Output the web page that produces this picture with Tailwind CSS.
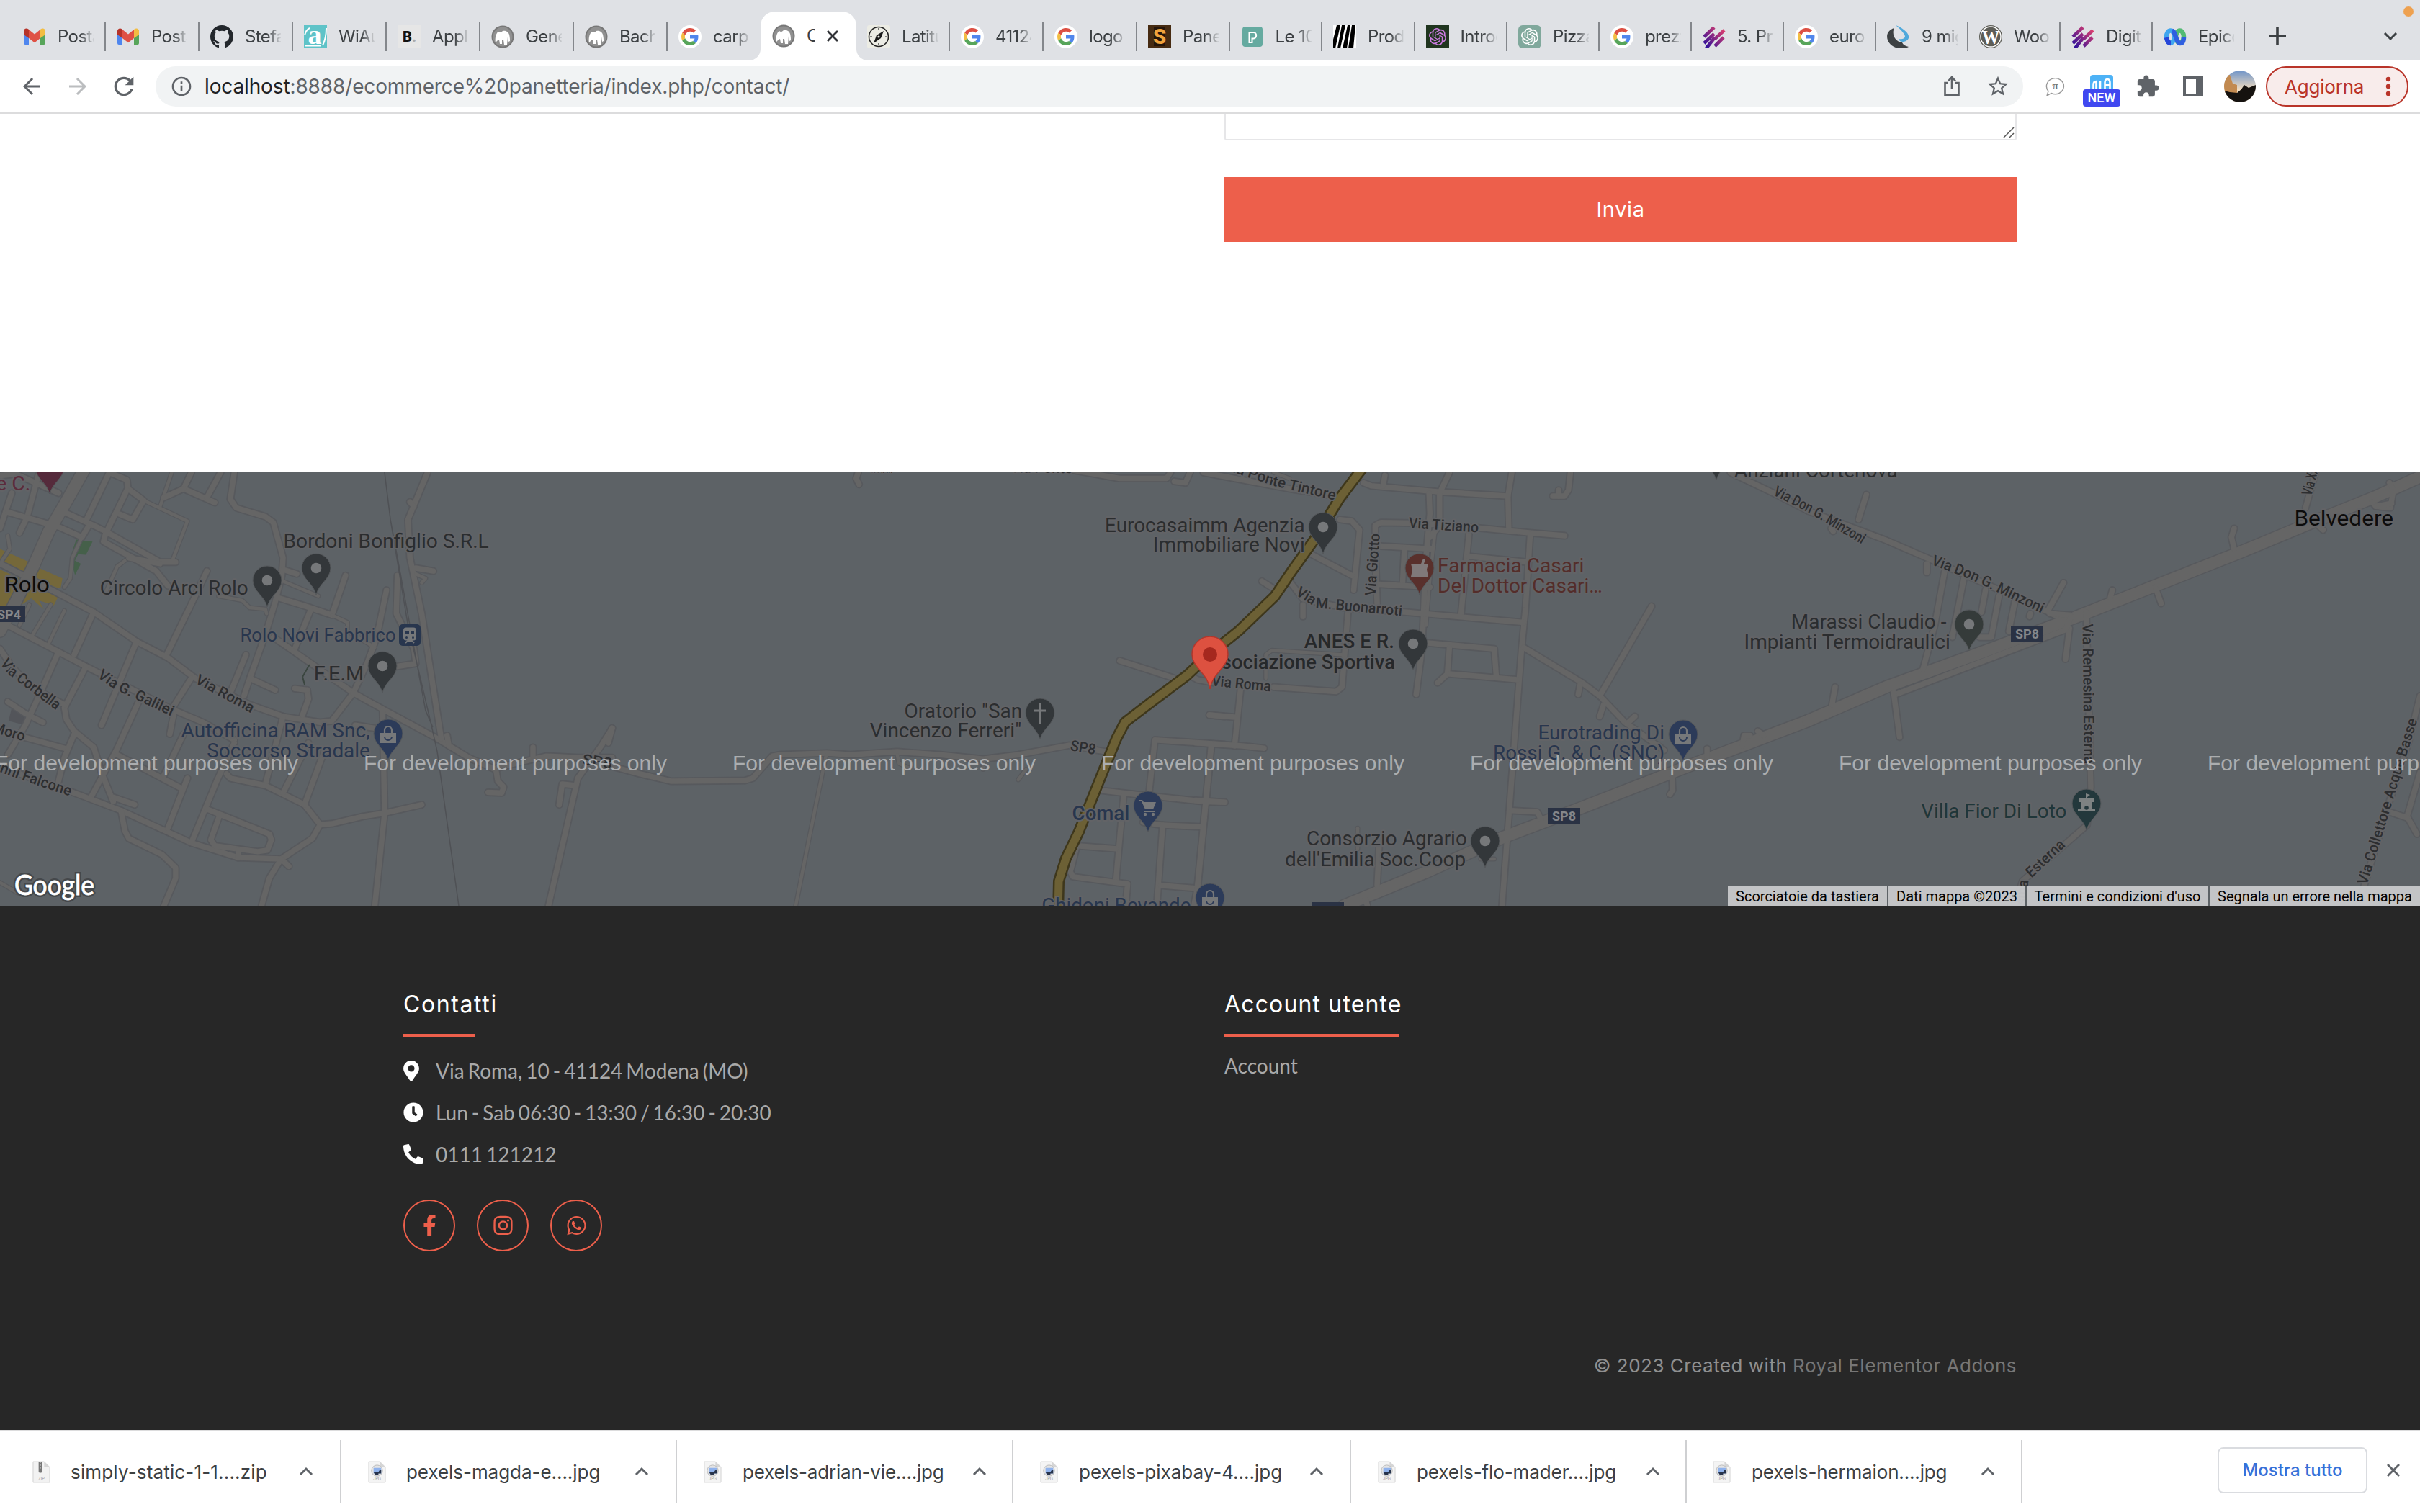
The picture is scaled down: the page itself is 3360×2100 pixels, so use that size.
<!DOCTYPE html>
<html lang="it">
<head>
<meta charset="utf-8">
<title>Contatti</title>
<script src="https://cdn.jsdelivr.net/npm/@tailwindcss/browser@4"></script>
</head>
<body class="w-[3360px] h-[2100px] overflow-hidden bg-white flex flex-col font-['Inter',sans-serif]">

<svg width="0" height="0" class="absolute">
  <defs>
    <symbol id="gmail" viewBox="0 0 32 32"><path d="M1 27V7l7 5v15H3a2 2 0 0 1-2-2z" fill="#4f86ee"/><path d="M31 27V7l-7 5v15h5a2 2 0 0 0 2-2z" fill="#57a55a"/><path d="M1 13V8C1 4.500 5 3.500 7.500 5.500L8 6v12z" fill="#b63329"/><path d="M8 6l8 6.500L24 6v12l-8 6.200L8 18z" fill="#df5145"/><path d="M31 13V8c0-3.500-4-4.500-6.500-2.500L24 6v12z" fill="#f3bd42"/></symbol>
    <symbol id="github" viewBox="0 0 16 16"><path fill="#23272c" d="M8 0C3.58 0 0 3.58 0 8c0 3.540 2.290 6.530 5.470 7.590.4.070.550-.170.550-.380 0-.190-.010-.820-.010-1.490-2.010.370-2.530-.490-2.690-.940-.090-.230-.480-.940-.820-1.130-.280-.150-.680-.520-.010-.530.630-.010 1.080.580 1.230.820.720 1.210 1.870.870 2.330.660.070-.520.280-.870.510-1.070-1.780-.2-3.640-.890-3.640-3.950 0-.870.310-1.590.820-2.150-.080-.2-.360-1.020.080-2.120 0 0 .670-.210 2.200.820.640-.180 1.320-.270 2-.270.680 0 1.360.090 2 .270 1.530-1.040 2.200-.820 2.200-.820.440 1.100.160 1.920.080 2.120.510.560.820 1.270.820 2.150 0 3.070-1.870 3.750-3.650 3.950.290.250.540.730.540 1.480 0 1.070-.010 1.930-.010 2.200 0 .210.150.460.550.380A8.013 8.013 0 0016 8c0-4.420-3.580-8-8-8z"/></symbol>
    <symbol id="teal-a" viewBox="0 0 32 32"><rect width="32" height="32" fill="#5fc3c8"/><path d="M1 14Q3 6 8 4M31 4q0 14-5 24M1 28.500h22" stroke="#fff" stroke-width="2" fill="none"/><text x="15" y="26" text-anchor="middle" font-family="Liberation Serif" font-weight="700" font-size="38" fill="#fff">a</text></symbol>
    <symbol id="b-dot" viewBox="0 0 32 32"><rect width="32" height="32" fill="#e6e6e6"/><text x="7" y="23" font-family="Roboto" font-weight="900" font-size="20" fill="#111">B<tspan fill="#aaa">.</tspan></text></symbol>
    <symbol id="mamp" viewBox="0 0 32 32"><circle cx="16" cy="16" r="15.500" fill="#777"/><circle cx="16" cy="16" r="13.500" fill="#909090"/><path d="M6 24c-1-4 0-13 4-15 2 2 4 1 6-1 5-1 8 2 9 5 1 4 1 7 1 9l-2 1-1-7-1 11h-4l-1-7h-2v6h-3l-1-6-2 1z" fill="#fff"/></symbol>
    <symbol id="google" viewBox="-8 -8 64 64"><circle cx="24" cy="24" r="32" fill="#fff"/><path fill="#dc5044" d="M24 9.500c3.540 0 6.710 1.220 9.210 3.600l6.850-6.850C35.900 2.380 30.470 0 24 0 14.620 0 6.510 5.380 2.560 13.220l7.980 6.190C12.430 13.720 17.740 9.500 24 9.500z"/><path fill="#5086ec" d="M46.980 24.550c0-1.570-.150-3.090-.380-4.550H24v9.020h12.940c-.580 2.960-2.260 5.480-4.780 7.180l7.730 6c4.510-4.180 7.090-10.360 7.090-17.650z"/><path fill="#f3be42" d="M10.530 28.590c-.480-1.450-.760-2.990-.760-4.590s.270-3.140.760-4.590l-7.980-6.190C.920 16.460 0 20.120 0 24c0 3.880.920 7.540 2.560 10.780l7.970-6.190z"/><path fill="#57a55a" d="M24 48c6.480 0 11.930-2.130 15.890-5.810l-7.730-6c-2.150 1.450-4.920 2.300-8.160 2.300-6.260 0-11.570-4.220-13.470-9.910l-7.980 6.190C6.510 42.620 14.620 48 24 48z"/></symbol>
    <symbol id="compass" viewBox="0 0 32 32"><rect width="32" height="32" rx="3" fill="#ecece4"/><circle cx="16" cy="16" r="13.500" fill="none" stroke="#222" stroke-width="1.600"/><path d="M16 4v3M16 25v3M4 16h3M25 16h3" stroke="#222" stroke-width="1.200"/><path d="M23 8l-4 10-10 7 4-11z" fill="#1a1a1a"/><circle cx="16" cy="16" r="1.600" fill="#ecece4"/></symbol>
    <symbol id="s-gold" viewBox="0 0 32 32"><rect width="32" height="32" fill="#462b12"/><rect x="8" y="3" width="16" height="26" fill="#24150a"/><text x="16" y="26" text-anchor="middle" font-family="Roboto" font-weight="900" font-size="29" fill="#f0a33c">S</text></symbol>
    <symbol id="p-teal" viewBox="0 0 32 32"><rect x="2" y="2" width="28" height="28" rx="4" fill="#65aaa0"/><path d="M11.500 24V10h6a4.300 4.300 0 0 1 0 8.500h-2V24z" fill="none" stroke="#fff" stroke-width="2"/></symbol>
    <symbol id="stripes" viewBox="0 0 32 32"><rect width="32" height="32" fill="#fff"/><path d="M0 32V20L5 0h5L3 32zM6 32L12 0h5L10 32zM13 32L20 0h4l-5 32zM21 32l5-32h5l-3 32z" fill="#000"/></symbol>
    <symbol id="knot" viewBox="0 0 24 24"><path fill="currentColor" d="M22.282 9.821a5.985 5.985 0 0 0-.516-4.911 6.046 6.046 0 0 0-6.510-2.900A6.065 6.065 0 0 0 4.981 4.182a5.985 5.985 0 0 0-3.998 2.900 6.046 6.046 0 0 0 .743 7.097 5.980 5.980 0 0 0 .511 4.911 6.051 6.051 0 0 0 6.515 2.900A5.985 5.985 0 0 0 13.260 24a6.056 6.056 0 0 0 5.772-4.206 5.989 5.989 0 0 0 3.998-2.900 6.056 6.056 0 0 0-.748-7.073zm-9.022 12.608a4.476 4.476 0 0 1-2.876-1.041l.142-.080 4.778-2.758a.795.795 0 0 0 .393-.681v-6.737l2.020 1.169a.071.071 0 0 1 .038.052v5.583a4.504 4.504 0 0 1-4.495 4.493zm-9.661-4.125a4.471 4.471 0 0 1-.535-3.014l.142.085 4.783 2.758a.771.771 0 0 0 .781 0l5.843-3.369v2.332a.080.080 0 0 1-.033.062L9.740 19.950a4.499 4.499 0 0 1-6.141-1.646zM2.341 7.896a4.485 4.485 0 0 1 2.366-1.973V11.600a.766.766 0 0 0 .388.677l5.814 3.354-2.020 1.169a.076.076 0 0 1-.071 0l-4.830-2.787A4.504 4.504 0 0 1 2.341 7.872zm16.596 3.856L13.104 8.364 15.119 7.200a.076.076 0 0 1 .071 0l4.830 2.791a4.494 4.494 0 0 1-.677 8.104v-5.677a.790.790 0 0 0-.406-.666zm2.011-3.023l-.142-.085-4.774-2.782a.776.776 0 0 0-.785 0L9.409 9.230V6.897a.066.066 0 0 1 .028-.062l4.830-2.787a4.499 4.499 0 0 1 6.681 4.661zM8.307 12.863l-2.020-1.164a.080.080 0 0 1-.038-.057V6.074a4.499 4.499 0 0 1 7.376-3.454l-.142.081L8.704 5.459a.795.795 0 0 0-.393.681zm1.097-2.365l2.602-1.500 2.607 1.500v2.999l-2.597 1.500-2.607-1.500z"/></symbol>
    <symbol id="knot-dark" viewBox="0 0 32 32"><rect width="32" height="32" fill="#20351f"/><use href="#knot" x="4" y="4" width="24" height="24" color="#cc7be0"/></symbol>
    <symbol id="knot-green" viewBox="0 0 32 32"><rect width="32" height="32" rx="6" fill="#80a89c"/><use href="#knot" x="4" y="4" width="24" height="24" color="#fff"/></symbol>
    <linearGradient id="pl" gradientUnits="userSpaceOnUse" x1="3" y1="30" x2="28" y2="4"><stop offset="0" stop-color="#2a0f9c"/><stop offset="1" stop-color="#e0406e"/></linearGradient>
    <symbol id="slashes" viewBox="0 0 32 32"><g stroke="url(#pl)" stroke-width="4.600" fill="none"><path d="M2 16L16 3M2 25L16 12M17 19L30 7M5 32L17 17M17 29L29 17"/></g></symbol>
    <symbol id="swirl" viewBox="0 0 32 32"><path d="M10 4C-4 8-3 25 12 31c6 2 13 2 18-1-5-1-8-3-9-6-10-1-15-12-11-20z" fill="#3d4143"/><path d="M12 0c8 3 17 9 18 15 1 4-2 7-7 8-4 0-6-1-7-4 4 1 9 0 9-4C23 10 18 5 12 0z" fill="#4fa9dc"/></symbol>
    <symbol id="wp" viewBox="0 0 32 32"><circle cx="16" cy="16" r="16" fill="#5d5d57"/><circle cx="16" cy="16" r="14" fill="none" stroke="#fff" stroke-width="1.400"/><text x="16" y="25.500" text-anchor="middle" textLength="25" lengthAdjust="spacingAndGlyphs" font-family="Liberation Serif" font-weight="700" font-size="28" fill="#fff">W</text></symbol>
    <symbol id="webex" viewBox="0 0 32 32"><g fill="none" stroke-width="6.500"><ellipse cx="22.500" cy="16" rx="5.500" ry="8.500" stroke="#54bb74"/><ellipse cx="9.500" cy="16" rx="5.500" ry="8.500" stroke="#3fa6ef"/><path d="M12 8c5 1 5 17 11 17 4 0 5-5 5-9" stroke="#2f5fe0"/><path d="M4 17c1 5 3 8 6 8" stroke="#2746d8"/></g></symbol>
    <symbol id="chev-up" viewBox="0 0 20 20"><path d="M2 14l8-8 8 8" fill="none" stroke="#5f6368" stroke-width="3"/></symbol>
    <symbol id="zip" viewBox="0 0 26 32"><path d="M1 1h16l8 8v22H1z" fill="#f2f2f2" stroke="#cfcfcf"/><path d="M17 1v8h8z" fill="#d5d5d5"/><rect x="9" y="1" width="5" height="16" rx="1.500" fill="#777"/><path d="M11.500 1v12" stroke="#ddd" stroke-dasharray="2 2"/><text x="13" y="28" text-anchor="middle" font-size="6" fill="#999">ZIP</text></symbol>
    <symbol id="jpg" viewBox="0 0 26 32"><path d="M1 1h16l8 8v22H1z" fill="#f4f4f4" stroke="#d2d2d2"/><path d="M17 1v8h8z" fill="#d5d5d5"/><circle cx="13" cy="14" r="8" fill="#e4e4e4" stroke="#b8b8b8"/><rect x="8" y="10" width="11" height="8" fill="#8fb2ec"/><path d="M8 16h7l2-3h2v5h-4v2h-5z" fill="#28344c"/><text x="13" y="28" text-anchor="middle" font-size="6" fill="#999">JPG</text></symbol>
  </defs>
</svg>

<!-- Tab strip -->
<header class="relative h-[84px] shrink-0 bg-[#dfe1e5] flex pl-[17px] text-[24px] text-[#3c4043]">
  <div id="tabs" class="flex h-full"></div>
  <div class="flex items-center pt-4 w-[260px] pl-8">
    <svg width="26" height="26" viewBox="0 0 26 26"><path d="M13 1v24M1 13h24" stroke="#3c4043" stroke-width="3.600"/></svg>
    <svg width="20" height="20" viewBox="0 0 20 20" class="ml-[134px]"><path d="M2 6l8 8 8-8" fill="none" stroke="#3c4043" stroke-width="3"/></svg>
  </div>
  <span class="absolute left-[3337px] top-[9px] size-3.5 rounded-full bg-[#eea150]"></span>
</header>

<!-- Toolbar -->
<div class="h-[74px] shrink-0 border-b-2 border-[#dcdcdd] flex items-center pl-[26px] text-[#5f6368]">
  <svg width="36" height="36" viewBox="0 0 24 24" fill="currentColor"><path d="M20 11H7.830l5.590-5.590L12 4l-8 8 8 8 1.410-1.410L7.830 13H20v-2z"/></svg>
  <svg width="36" height="36" viewBox="0 0 24 24" fill="#bbbdbf" class="ml-7"><path d="M12 4l-1.410 1.410L16.170 11H4v2h12.170l-5.580 5.590L12 20l8-8z"/></svg>
  <svg width="40" height="40" viewBox="0 0 24 24" fill="currentColor" class="ml-[26px]"><path d="M17.650 6.350C16.200 4.900 14.210 4 12 4c-4.420 0-7.990 3.580-7.990 8s3.570 8 7.990 8c3.730 0 6.840-2.550 7.730-6h-2.080c-.820 2.330-3.040 4-5.650 4-3.310 0-6-2.690-6-6s2.690-6 6-6c1.660 0 3.140.690 4.220 1.780L13 11h7V4l-2.350 2.350z"/></svg>
  <div class="ml-6 w-[2593px] h-14 rounded-full bg-[#f1f3f4] flex items-center pl-5">
    <svg width="32" height="32" viewBox="0 0 24 24" fill="currentColor"><path d="M11 7h2v2h-2zm0 4h2v6h-2zm1-9C6.480 2 2 6.480 2 12s4.480 10 10 10 10-4.480 10-10S17.520 2 12 2zm0 18c-4.410 0-8-3.590-8-8s3.590-8 8-8 8 3.590 8 8-3.590 8-8 8z"/></svg>
    <span class="ml-4 w-[820px] whitespace-nowrap text-[28px] tracking-[-0.13px] text-[#5f6368]"><span class="text-[#202124]">localhost</span>:8888/ecommerce%20panetteria/index.php/contact/</span>
    <svg width="32" height="32" viewBox="0 0 32 32" fill="none" stroke="currentColor" stroke-width="2.600" class="ml-auto"><path d="M11 11H6.500v17h19V11H21M16 20V4M11 8.500L16 3l5 5.500"/></svg>
    <svg width="34" height="34" viewBox="0 0 24 24" fill="currentColor" class="ml-[31px] mr-[18px]"><path d="M22 9.240l-7.190-.620L12 2 9.190 8.630 2 9.240l5.460 4.730L5.820 21 12 17.270 18.180 21l-1.630-7.030L22 9.240zM12 15.400l-3.760 2.270 1-4.280-3.320-2.880 4.380-.380L12 6.100l1.710 4.040 4.380.380-3.320 2.880 1 4.280L12 15.400z"/></svg>
  </div>
  <svg width="28" height="28" viewBox="0 0 28 28" class="ml-[30px]"><path d="M5 20.500L3 27l6-3.500A12 11 0 1 0 5 20.500z" fill="#fff" stroke="#999" stroke-width="1.400"/><text x="14.500" y="18" text-anchor="middle" font-size="15" font-family="Liberation Serif" font-weight="700" fill="#777">π</text></svg>
  <div class="ml-[25px] w-[52px] h-14 flex flex-col items-center pt-3">
    <svg width="32" height="20" viewBox="0 0 32 20"><path d="M0 20V4a4 4 0 0 1 4-4h24a4 4 0 0 1 4 4v16z" fill="#4db2f6"/><path d="M4.500 20v-6q0-5 4-5v11M14 9v11M20.500 20V11q0-5 3.500-5t3.500 5v9M20.500 14h7" fill="none" stroke="#fff" stroke-width="2.600"/></svg>
    <span class="w-[52px] h-6 rounded bg-[#4048f0] text-white text-[18px] leading-6 text-center font-medium font-['Roboto']">NEW</span>
  </div>
  <svg width="34" height="34" viewBox="0 0 24 24" fill="currentColor" class="ml-[21px]"><path d="M20.500 11H19V7c0-1.100-.9-2-2-2h-4V3.500C13 2.120 11.880 1 10.500 1S8 2.120 8 3.500V5H4c-1.100 0-1.990.9-1.990 2v3.800H3.500c1.490 0 2.700 1.210 2.700 2.700s-1.210 2.700-2.700 2.700H2V20c0 1.100.9 2 2 2h3.800v-1.500c0-1.490 1.210-2.700 2.700-2.700 1.490 0 2.700 1.210 2.700 2.700V22H17c1.100 0 2-.9 2-2v-4h1.500c1.380 0 2.500-1.120 2.500-2.500S21.880 11 20.500 11z"/></svg>
  <svg width="28" height="28" viewBox="0 0 28 28" class="ml-8"><path fill="currentColor" fill-rule="evenodd" d="M0 0h28v28H0zM4 4v20h14V4z"/></svg>
  <svg width="44" height="44" viewBox="0 0 44 44" class="ml-[29px]">
    <defs><clipPath id="av"><circle cx="22" cy="22" r="22"/></clipPath><linearGradient id="sky" x2="0" y2="1"><stop offset="0" stop-color="#6f94c8"/><stop offset=".6" stop-color="#f0dcc0"/></linearGradient></defs>
    <g clip-path="url(#av)"><rect width="44" height="44" fill="url(#sky)"/><path d="M0 6h8l4 12 6 2v12H0z" fill="#c28a50"/><path d="M0 28l8 2 10 1 6-5 4-6 6 4 10-4v24H0z" fill="#15120f"/></g>
  </svg>
  <div class="ml-3.5 w-[198px] h-14 rounded-full border-[2.500px] border-[#b93429] bg-[#f8eceb] flex items-center pl-6 text-[#b93429]">
    <span class="text-[26px] tracking-[-0.2px] w-[110px] whitespace-nowrap">Aggiorna</span>
    <svg width="8" height="28" viewBox="0 0 8 28" fill="currentColor" class="ml-[30px]"><circle cx="4" cy="4" r="3.200"/><circle cx="4" cy="14" r="3.200"/><circle cx="4" cy="24" r="3.200"/></svg>
  </div>
</div>

<!-- Contact form end -->
<main class="h-[498px] shrink-0 flex flex-col items-end pr-[560px]">
  <div class="w-[1100px] h-[37px] border-2 border-t-0 border-[#e6e6e8] rounded-b-[3px] flex justify-end items-end">
    <svg width="18" height="18" viewBox="0 0 18 18"><path d="M2 16L16 2M10 16l6-6" stroke="#555" stroke-width="1.500"/></svg>
  </div>
  <button class="mt-[51px] w-[1100px] h-[90px] bg-[#ed5f4b] text-white text-[29px] tracking-[0.6px]">Invia</button>
</main>

<!-- Map -->
<section class="relative h-[602px] shrink-0 overflow-hidden bg-[#5d6266] flex justify-end items-end">
  <svg id="map" class="absolute inset-0" width="3360" height="602" viewBox="0 656 3360 602"></svg>
  <div class="relative flex h-7 text-[20px] leading-[30px] text-black font-['Roboto'] whitespace-nowrap">
    <span class="w-[223px] bg-[#c8c9cb]/95 border-r-2 border-[#5d6266] text-center">Scorciatoie da tastiera</span>
    <span class="w-[192px] bg-[#c8c9cb]/95 border-r-2 border-[#5d6266] text-center">Dati mappa ©2023</span>
    <span class="w-[254px] bg-[#c8c9cb]/95 border-r-2 border-[#5d6266] text-center">Termini e condizioni d'uso</span>
    <span class="w-[292px] bg-[#c8c9cb]/95 text-center">Segnala un errore nella mappa</span>
  </div>
</section>

<!-- Footer -->
<footer class="h-[728px] shrink-0 bg-[#272727] px-[560px] flex flex-col">
  <div class="flex pt-[112px]">
    <div class="w-[1140px]">
      <h2 class="h-[50px] leading-[50px] text-[32px] text-white tracking-[1.600px]">Contatti</h2>
      <div class="mt-4 w-[99px] h-1 bg-[#ed5f4b]"></div>
      <ul class="mt-[18px] font-['Lato'] text-[28px] text-[#a9a9a9] [word-spacing:-2.2px]">
        <li class="h-[58px] flex items-center"><svg width="22" height="29" viewBox="0 0 384 512" fill="#fff" class="mr-[23px]"><path d="M172.268 501.670C26.970 291.031 0 269.413 0 192 0 85.961 85.961 0 192 0s192 85.961 192 192c0 77.413-26.970 99.031-172.268 309.670-9.535 13.774-29.930 13.773-39.464 0zM192 272c44.183 0 80-35.817 80-80s-35.817-80-80-80-80 35.817-80 80 35.817 80 80 80z"/></svg>Via Roma, 10 - 41124 Modena (MO)</li>
        <li class="h-[58px] flex items-center"><svg width="28" height="28" viewBox="0 0 512 512" fill="#fff" class="mr-[17px]"><path d="M256 8C119 8 8 119 8 256s111 248 248 248 248-111 248-248S393 8 256 8zm92.490 313l-20 25a16 16 0 0 1-22.490 2.500l-67-49.720a40 40 0 0 1-15-31.230V112a16 16 0 0 1 16-16h32a16 16 0 0 1 16 16v144l58 42.500a16 16 0 0 1 2.490 22.500z"/></svg>Lun - Sab 06:30 - 13:30 / 16:30 - 20:30</li>
        <li class="h-[58px] flex items-center"><svg width="28" height="28" viewBox="0 0 512 512" fill="#fff" class="mr-[17px]"><path d="M497.390 361.800l-112-48a24 24 0 0 0-28 6.900l-49.600 60.600A370.660 370.660 0 0 1 130.600 204.110l60.600-49.600a23.940 23.940 0 0 0 6.900-28l-48-112A24.160 24.160 0 0 0 122.600.610l-104 24A24 24 0 0 0 0 48c0 256.500 207.900 464 464 464a24 24 0 0 0 23.400-18.600l24-104a24.290 24.290 0 0 0-14.010-27.600z"/></svg>0111 121212</li>
      </ul>
      <div class="mt-[34px] flex gap-[30px] text-[#ed5f4b]">
        <a class="size-[72px] rounded-full border-2 border-[#ed5f4b] flex items-center justify-center"><svg width="19" height="30" viewBox="0 0 320 512" fill="currentColor"><path d="M279.140 288l14.220-92.660h-88.910v-60.130c0-25.350 12.420-50.060 52.240-50.060h40.420V6.260S260.430 0 225.360 0c-73.220 0-121.080 44.380-121.080 124.720v70.620H22.890V288h81.390v224h100.170V288z"/></svg></a>
        <a class="size-[72px] rounded-full border-2 border-[#ed5f4b] flex items-center justify-center"><svg width="27" height="30" viewBox="0 0 448 512" fill="currentColor"><path d="M224.100 141c-63.600 0-114.900 51.300-114.900 114.900s51.300 114.900 114.900 114.900S339 319.500 339 255.900 287.700 141 224.100 141zm0 189.600c-41.100 0-74.700-33.500-74.700-74.700s33.500-74.700 74.700-74.700 74.700 33.500 74.700 74.700-33.600 74.700-74.700 74.700zm146.400-194.300c0 14.900-12 26.800-26.800 26.800-14.900 0-26.800-12-26.800-26.800s12-26.800 26.800-26.800 26.800 12 26.800 26.800zm76.100 27.200c-1.700-35.900-9.900-67.700-36.200-93.900-26.200-26.200-58-34.400-93.900-36.200-37-2.100-147.900-2.100-184.900 0-35.800 1.700-67.600 9.900-93.900 36.100s-34.400 58-36.200 93.900c-2.100 37-2.100 147.900 0 184.900 1.700 35.900 9.900 67.700 36.200 93.900s58 34.400 93.900 36.200c37 2.100 147.900 2.100 184.900 0 35.900-1.700 67.700-9.900 93.900-36.200 26.200-26.200 34.400-58 36.200-93.900 2.100-37 2.100-147.800 0-184.800zM398.800 388c-7.800 19.600-22.900 34.700-42.600 42.600-29.500 11.700-99.500 9-132.100 9s-102.700 2.600-132.100-9c-19.600-7.800-34.700-22.900-42.600-42.600-11.700-29.500-9-99.500-9-132.100s-2.600-102.700 9-132.100c7.800-19.600 22.900-34.700 42.600-42.600 29.500-11.700 99.500-9 132.100-9s102.700-2.600 132.100 9c19.600 7.800 34.700 22.900 42.600 42.600 11.700 29.500 9 99.500 9 132.100s2.700 102.700-9 132.100z"/></svg></a>
        <a class="size-[72px] rounded-full border-2 border-[#ed5f4b] flex items-center justify-center"><svg width="27" height="30" viewBox="0 0 448 512" fill="currentColor"><path d="M380.900 97.100C339 55.100 283.200 32 223.900 32c-122.400 0-222 99.600-222 222 0 39.100 10.200 77.300 29.600 111L0 480l117.700-30.900c32.400 17.700 68.900 27 106.100 27h.1c122.300 0 224.100-99.600 224.100-222 0-59.300-25.200-115-67.100-157zm-157 341.600c-33.200 0-65.700-8.900-94-25.700l-6.700-4-69.800 18.300L72 359.200l-4.400-7c-18.500-29.400-28.200-63.300-28.200-98.200 0-101.700 82.800-184.500 184.600-184.500 49.300 0 95.600 19.200 130.400 54.100 34.800 34.900 56.200 81.200 56.100 130.500 0 101.800-84.900 184.600-186.600 184.600zm101.200-138.200c-5.500-2.800-32.800-16.200-37.900-18-5.100-1.900-8.800-2.800-12.500 2.800-3.700 5.600-14.300 18-17.600 21.800-3.200 3.700-6.500 4.200-12 1.400-32.600-16.300-54-29.100-75.500-66-5.700-9.800 5.700-9.100 16.300-30.300 1.800-3.700.9-6.900-.5-9.700-1.400-2.800-12.500-30.100-17.100-41.200-4.500-10.800-9.100-9.300-12.500-9.500-3.200-.2-6.900-.2-10.600-.2-3.700 0-9.700 1.400-14.800 6.900-5.100 5.600-19.400 19-19.400 46.300 0 27.300 19.900 53.700 22.600 57.400 2.800 3.700 39.100 59.700 94.800 83.800 35.200 15.200 49 16.500 66.600 13.900 10.700-1.600 32.800-13.400 37.400-26.400 4.600-13 4.600-24.100 3.200-26.400-1.300-2.500-5-3.900-10.500-6.600z"/></svg></a>
      </div>
    </div>
    <div>
      <h2 class="h-[50px] leading-[50px] text-[32px] text-white tracking-[1.150px] whitespace-nowrap">Account utente</h2>
      <div class="mt-4 w-[242px] h-1 bg-[#ed5f4b]"></div>
      <p class="mt-[23px] leading-[34px] font-['Lato'] text-[28px] text-[#a9a9a9]">Account</p>
    </div>
  </div>
  <p class="mt-[139px] leading-10 text-right text-[26px] tracking-[0.500px] text-[#767676] whitespace-nowrap"><span class="text-[#909090]">© 2023 Created with</span> Royal Elementor Addons</p>
</footer>

<!-- Downloads shelf -->
<div class="h-[114px] shrink-0 border-t-2 border-[#dcdcdd] flex pt-3 text-[26px] text-[#3c4043]">
  <div id="downloads" class="flex h-[88px]"></div>
  <button class="ml-[271px] mt-2.5 w-[208px] h-16 rounded-lg border-2 border-[#dadce0] text-[#3671d9] text-[24px] font-medium whitespace-nowrap">Mostra tutto</button>
  <svg width="20" height="20" viewBox="0 0 20 20" class="ml-[26px] mt-8"><path d="M2 2l16 16M18 2L2 18" stroke="#5f6368" stroke-width="2.800"/></svg>
</div>

<script>
const tabs = [
  ['gmail','Posta'],['gmail','Posta'],['github','Stefano'],['teal-a','WiAut'],['b-dot','Apple'],['mamp','Genera'],['mamp','Bach'],['google','carpi'],
  ['mamp','Contatti',true],['compass','Latitu'],['google','41124'],['google','logo p'],['s-gold','Panet'],['p-teal','Le 10'],['stripes','Produ'],['knot-dark','Introd'],
  ['knot-green','Pizza'],['google','prezz'],['slashes','5. Pro'],['google','euro s'],['swirl','9 mig'],['wp','WooC'],['slashes','Digita'],['webex','Epico']];
document.getElementById('tabs').innerHTML = tabs.map(([icon, title, active], i) => {
  const w = i === 8 ? 129 : i < 12 ? 130 : i < 16 ? 128.5 : 128;
  if (active) return `<div class="relative h-[68px] mt-4 bg-white rounded-t-[20px] flex items-center pl-4 pr-6" style="width:${w + 4}px">
    <svg class="absolute -left-4 bottom-0" width="16" height="16"><path d="M16 0v16H0A16 16 0 0 0 16 0z" fill="#fff"/></svg>
    <svg class="absolute -right-4 bottom-0" width="16" height="16"><path d="M0 0v16h16A16 16 0 0 1 0 0z" fill="#fff"/></svg>
    <svg width="32" height="32"><use href="#${icon}"/></svg>
    <span class="ml-4 w-3 overflow-hidden whitespace-nowrap">C</span>
    <svg class="ml-auto" width="18" height="18" viewBox="0 0 18 18"><path d="M2 2l14 14M16 2L2 16" stroke="#303236" stroke-width="2.800"/></svg></div>`;
  const sep = i === 7 ? 'border-transparent' : 'border-[#84878c]';
  return `<div class="flex items-center h-10 mt-[31px] border-r-2 ${sep} pl-[15px]" style="width:${i === 7 ? w - 1 : w}px">
    <svg width="32" height="32" class="shrink-0"><use href="#${icon}"/></svg>
    <span class="ml-4 w-[50px] overflow-hidden whitespace-nowrap tracking-[-0.6px] [mask-image:linear-gradient(to_right,black_62%,transparent_104%)]">${title}</span></div>`;
}).join('');

const files = [['simply-static-1-1....zip',474,45,98,272,425],['pexels-magda-e....jpg',466,37,90,267,417],['pexels-adrian-vie....jpg',467,37,91,281,420],
  ['pexels-pixabay-4....jpg',469,37,91,281,421],['pexels-flo-mader....jpg',466,37,91,279,419],['pexels-hermaion....jpg',466,36,90,272,418]];
const track = [0.16, -0.05, -0.2, 0, -0.1, -0.15];
document.getElementById('downloads').innerHTML = files.map(([name, w, ix, tx, tw, cx], i) =>
  `<div class="flex items-center border-r-2 border-[#cfd0d2]" style="width:${w}px;padding-left:${ix}px">
    <svg width="25" height="31" class="shrink-0"><use href="#${i ? 'jpg' : 'zip'}"/></svg>
    <span class="whitespace-nowrap shrink-0" style="margin-left:${tx - ix - 25}px;width:${tw}px;letter-spacing:${track[i]}px">${name}</span>
    <svg width="20" height="20" class="shrink-0" style="margin-left:${cx - 10 - tx - tw}px"><use href="#chev-up"/></svg></div>`).join('');

/* Map: four survey sheets, each with its own grid, projected to page units */
const sheetX = [0, 850, 1660, 2510], SX = 850 / 1568, SY = 640 / 1568;
const px = (s, x) => +(sheetX[s] + x * SX).toFixed(1), py = y => +(640 + y * SY).toFixed(1);
const line = (s, pts) => 'M' + pts.trim().split(/\s+/).map(p => { const [x, y] = p.split(',').map(Number); return px(s, x) + ' ' + py(y); }).join('L');
const roads = [
`n|440,40 410,155
n|368,135 480,205 440,345
m|0,50 40,45 150,110
m|100,40 70,190 50,245
m|30,110 0,230
m|20,175 150,225 210,260 230,215
m|165,175 240,220 270,240 410,345 450,345
m|280,40 325,65 328,95 368,135 340,200 300,178
m|280,40 220,205
m|325,100 270,250 265,275 400,375 430,425
m|330,330 410,350
m|490,40 470,95 550,142
m|470,95 420,125
m|565,40 530,125
m|600,40 590,130 605,160 680,190 700,210 725,330 722,390 705,480 680,590 640,740 625,800
m|710,465 795,500 850,525 885,390
n|850,525 890,550 890,580 960,635
m|795,510 755,640
m|640,740 705,780
m|725,370 760,385
n|725,410 815,460
n|560,460 620,475 640,500 680,505 683,520
m|530,375 500,460 425,665
n|20,255 25,300 5,340
n|210,260 185,330 180,400 165,430
m|0,350 60,390 140,445 240,515 350,615 430,670 500,740 640,830 725,870 820,890 850,885 905,790 940,690 965,600 990,440
m|905,790 830,720 700,600
m|905,790 980,845 1120,945 1200,1010 1265,1048 1320,1030 1400,1005 1480,1010 1568,1010
m|0,540 20,560 150,650 220,700 440,845 520,890 600,950
m|240,515 190,660
n|165,510 125,620
n|130,490 80,600
n|75,490 50,560
n|320,340 300,360 270,450
m|350,615 260,900
m|490,740 440,845
m|445,860 435,930
m|630,660 590,790
m|725,870 680,1100
m|787,780 790,810 775,865
m|755,775 787,780
m|150,650 100,800 65,900 20,1000
m|220,700 165,840 170,880 190,920 240,975 260,1060 290,1160
m|20,820 65,860 110,890
m|0,640 30,700 80,770 165,830
m|0,920 60,940 170,980
m|190,930 165,1010 150,1090
m|355,820 300,980 235,1140
m|300,1000 465,1115
m|470,930 420,1070
m|0,1040 60,1070 180,1125 310,1190 490,1300 610,1350 720,1355 800,1285 820,1238 780,1170 680,1105 590,1080 580,1065
m|820,1238 850,1235 930,1210 980,1200 1080,1170
m|290,1145 345,1170
m|310,1190 320,1260 330,1285 415,1340 450,1385 450,1420 420,1514
m|720,1355 740,1380
m|720,1355 690,1420 670,1514
m|600,960 555,1090 490,1300
m|480,1080 430,1250
m|530,1185 690,1270 695,1290 685,1325 660,1330 550,1310 540,1290 560,1215
m|610,1350 610,1325
m|790,960 725,1130
m|830,990 780,1170
m|980,845 985,1200 960,1514
m|910,900 960,910
m|1095,40 1045,200 1050,330 1080,520 1130,945
m|1050,140 1060,155
m|1065,365 1110,375
n|1065,385 1090,400 1080,415
m|1018,390 1015,520 1060,640 1065,690 1015,700
m|1145,935 1150,970
m|1365,975 1365,1005
m|1270,1050 1275,1090 1290,1110 1285,1130 1250,1128
m|1568,910 1540,970 1480,1080 1405,1514
m|1475,1105 1440,1100 1432,1170
n|0,1435 45,1470`,
`m|0,910 -10,960
m|0,1040 70,1065 150,1090 340,1088 360,1080 410,1005 430,1000 550,995 610,1000 730,990 840,1000 950,1015 1040,1000 1170,968 1265,990
n|548,1000 505,1280 470,1514
n|730,1000 735,1030 760,1045
n|1060,1050 1040,1085
n|950,1015 950,1050
m|630,40 625,60 632,80
m|1130,-10 1170,30 1300,60 1420,60 1430,40
m|1480,40 1468,75 1440,70
m|1300,680 1440,740
m|1470,725 1500,745 1540,755
m|1530,865 1568,870
m|1375,1130 1390,950 1568,965
m|1240,1120 1340,1135 1520,1160 1568,1162
m|1310,1140 1290,1430
m|1170,1390 1180,1415 1320,1440 1315,1514
m|1290,1320 1190,1310 1175,1390
m|1360,1230 1410,1240 1505,1245
m|1410,1240 1395,1514
m|1405,1445 1500,1455
m|1535,965 1500,1445 1490,1514`,
`m|20,40 240,95 380,125
m|430,75 450,85 620,105 800,120
m|485,50 480,85
n|200,40 240,60
m|650,40 625,110 625,220 600,260
m|598,110 600,180 590,330 580,640 565,795
n|615,220 600,400 590,560
m|810,40 800,120 802,225
m|960,40 955,100 945,120 915,120
m|930,100 930,120
m|370,200 400,205 420,235 405,440
m|285,310 400,390
m|465,490 460,300 460,220 475,210 560,212 740,230 855,245 945,255
m|475,290 605,300
m|535,300 530,420
m|470,420 600,430
m|700,250 680,520
m|700,325 850,345
m|857,250 845,500 835,640 820,900 800,1250 785,1514
m|170,410 200,435
m|235,400 275,470 380,500 540,515 840,550
m|275,490 275,530
m|390,520 375,770 360,785 200,770
n|180,740 180,660 195,645 380,660
m|115,780 100,970
m|35,865 100,872
m|0,960 120,970 175,978
m|595,620 765,640 770,730
m|650,635 645,725 620,755
m|650,725 825,745
m|840,635 990,755 1035,800 1100,890 1200,985
m|1168,495 1035,800
m|985,760 980,795
m|1045,830 1035,870
m|1125,870 1105,895
h|380,1514 590,1400 790,1280 990,1180 1260,1040 1568,885
m|435,1490 440,1514
m|470,1310 465,1445
n|415,1250 415,1320
m|810,1190 875,1195 885,1220
m|1310,980 1310,1010
m|1400,970 1405,935 1420,935
m|1440,920 1455,935
m|1220,1075 1222,1120 1215,1135
m|40,965 0,1514
m|0,1155 75,1162
n|730,1355 765,1355
m|1370,40 1480,110 1568,170`,
`m|0,170 200,270 330,345 610,510 640,530
h|0,885 200,770 470,640 680,535 890,425 1110,310 1300,205 1450,125 1568,55
m|150,115 130,200
m|60,230 65,240
m|350,380 325,560 295,710
m|400,400 370,600
m|305,350 305,380
m|455,440 445,515
m|490,460 470,600 440,600
m|530,480 515,580
m|570,520 568,530
m|655,415 615,510
m|620,520 670,525
m|670,570 660,675
m|225,795 660,575 675,530
m|220,790 235,940
m|70,770 62,830
m|780,440 775,465
m|890,430 905,485
m|1092,230 1085,260 1092,300
m|1275,160 1300,40
m|1300,210 1320,235
m|1490,75 1500,100 1492,160 1455,155 1445,140
m|1455,155 1495,145
m|713,515 725,1110 715,1240 550,1430 530,1514
m|1568,800 1540,950 1480,1200 1410,1514
m|1568,1060 1535,1210 1560,1270
m|1490,1195 1535,1215`];
const W = { n: [7, 4.5], m: [11, 7.5], h: [19, 16] };
const road = roads.flatMap((t, s) => t.split('\n').map(l => { const [k, p] = l.split('|'); return [k, line(s, p)]; }));
let out = '';
out += `<path d="${line(0,'0,300 75,345 65,385 0,350')}Z" fill="#75683a"/><path d="${line(0,'95,362 160,400 155,435 75,400')}Z" fill="#75683a"/><path d="${line(0,'0,370 150,460 138,492 100,475 112,505 80,468 55,490 0,495')}Z" fill="#75683a"/>`;
out += `<path d="${line(0,'195,268 237,275 220,320 200,318 192,340 207,350 192,388 180,330')}Z" fill="#45604a"/>`;
out += `<path d="${line(0,'30,840 90,855 65,900 22,885')}Z" fill="#53555a"/>`;
out += '<g fill="none" stroke-linecap="round" stroke-linejoin="round">';
out += road.map(([k, d]) => `<path d="${d}" stroke="#57595d" stroke-width="${W[k][0]}"/>`).join('');
const main = line(0, '220,20 165,150 125,240 85,360 40,480 0,580');
out += `<path d="${main}" stroke="#57595d" stroke-width="19"/>`;
out += road.map(([k, d]) => `<path d="${d}" stroke="#656565" stroke-width="${W[k][1]}"/>`).join('');
out += `<path d="${main}" stroke="#656565" stroke-width="16"/>`;
out += `<path d="${line(0,'985,40 1000,200 1045,560 1105,900 1120,990 1175,1514')}M${px(0,1000)} ${py(200)}L${px(0,1090)} ${py(850)}L${px(0,1108)} ${py(905)}" stroke="#4f5155" stroke-width="1.500"/>`;
out += `<path d="${line(0,'792,695 775,735 780,760')}" stroke="#3b4640" stroke-width="2"/>`;
const hw = 'M' + [[1892,650],[1860,692],[1826,748],[1793,794],[1770,828],[1720,876],[1680,908],[1648,938],[1600,974],[1562,1003],[1550,1026],[1520,1100],[1498,1155],[1480,1192],[1470,1224],[1469,1270]].map(p => p.join(' ')).join('L');
out += `<path d="${hw}" stroke="#3e371c" stroke-width="16"/><path d="${hw}" stroke="#6c6035" stroke-width="11"/></g>`;

const esc = t => t.replace(/&/g, '&amp;');
const text = (s, x1, x2, y, t, fill = '#2b2d2f', weight = 400, size = 28) =>
  `<text x="${px(s, x1)}" y="${py(y + 1.5)}" font-size="${size}" font-weight="${weight}" textLength="${((x2 - x1) * SX).toFixed(1)}" lengthAdjust="spacingAndGlyphs" fill="${fill}">${esc(t)}</text>`;
const navy = '#28364e', brick = '#542d2a';
out += '<g font-family="Roboto" stroke="#626366" stroke-width="4" stroke-linejoin="round" paint-order="stroke">';
out += text(0,-40,78,100,'he C.','#5b2b3b') + text(0,12,127,445,'Rolo','#0c0c0c',400,29) + text(0,726,1252,295,'Bordoni Bonfiglio S.R.L') + text(0,256,636,455,'Circolo Arci Rolo')
 + text(0,615,1014,613,'Rolo Novi Fabbrico',navy,400,26) + text(0,804,932,746,'F.E.M') + text(0,464,948,940,'Autofficina RAM Snc,',navy) + text(0,530,948,1008,'Soccorso Stradale',navy)
 + text(1,1262,1774,240,'Eurocasaimm Agenzia') + text(1,1385,1774,308,'Immobiliare Novi') + text(1,748,1050,872,'Oratorio "San') + text(1,660,1048,940,'Vincenzo Ferreri"')
 + text(1,1178,1325,1221,'Comal',navy,500) + text(1,1100,1482,1535,'Ghidoni Bevande',navy)
 + text(2,620,995,379,'Farmacia Casari',brick) + text(2,620,1042,447,'Del Dottor Casari…',brick) + text(2,278,509,636,'ANES E R.','#26282a',500) + text(2,40,511,706,'ssociazione Sportiva','#26282a',500)
 + text(2,877,1201,947,'Eurotrading Di',navy) + text(2,762,1201,1015,'Rossi G. & C. (SNC)',navy) + text(2,284,695,1307,'Consorzio Agrario') + text(2,229,692,1377,"dell'Emilia Soc.Coop")
 + text(2,1380,1798,55,'Anziani Cortenova') + text(2,1525,1923,570,'Marassi Claudio -') + text(2,1405,1933,638,'Impianti Termoidraulici')
 + text(3,290,663,1214,'Villa Fior Di Loto','#1f3639') + text(3,1246,1500,218,'Belvedere','#0c0c0c',400,30);
out += '</g>';

const streets = [
 [0,'0,690 20,725 145,850','Via Corbella',0],[0,'248,735 290,775 440,870','Via G. Galilei'],[0,'498,755 560,800 645,860','Via Roma'],[0,'-22,922 62,955','Moro'],[0,'-90,1015 60,1088 180,1142','Giovanni Falcone'],
 [0,'1490,1032 1568,1048','SP8'],
 [1,'660,40 720,42','V. A. M'],[1,'1020,40 1180,42','Via Ponte'],[2,'70,28 200,85 358,135','Via Ponte Tintore'],[2,'545,228 726,244','Via Tiziano'],[2,'460,460 472,246','Via Giotto'],
 [2,'255,455 310,500 530,528','Via M. Buonarroti'],[2,'40,765 194,785','Via Roma'],[1,'1172,985 1238,1000','SP8'],
 [2,'1478,115 1568,175 1708,285','Via Don G. Minzoni'],[3,'315,352 420,405 600,520','Via Don G. Minzoni'],[3,'704,555 708,1035','Via Remesina Esterna'],
 [3,'1290,120 1320,-30','Via XX Set'],[3,'1432,1445 1500,1150 1562,880','Via Collettore Acque Basse'],[3,'555,1540 565,1430 662,1308','esina Esterna']];
out += '<g font-family="Roboto" font-weight="500" font-size="20.5" fill="#2d2e30" stroke="#626366" stroke-width="4" stroke-linejoin="round" paint-order="stroke">';
streets.forEach(([s, p, t], i) => {
  const pts = p.split(' ').map(q => q.split(',').map(Number)).map(([x, y]) => [px(s, x), py(y)]);
  let len = 0; for (let k = 1; k < pts.length; k++) len += Math.hypot(pts[k][0] - pts[k-1][0], pts[k][1] - pts[k-1][1]);
  out += `<path id="st${i}" d="${line(s, p)}" fill="none" stroke="none"/><text><textPath href="#st${i}" textLength="${(len - 1).toFixed(1)}" lengthAdjust="spacingAndGlyphs">${t}</textPath></text>`;
});
out += '</g>';

const shield = (x, y, w, t) => `<rect x="${x}" y="${y}" width="${w}" height="22" fill="#2a3244"/><text x="${x + w / 2}" y="${y + 18}" text-anchor="middle" font-family="Roboto" font-weight="700" font-size="18" fill="#85878a">${t}</text>`;
out += shield(-10, 842, 45, 'SP4') + shield(2149, 1122, 45, 'SP8') + shield(2792, 869, 45, 'SP8') + shield(1821, 1253, 45, 'SP8');

const dot = '<circle cy="-37" r="7.300" fill="#76787a"/>';
const bag = '<path d="M-11-38h22v14h-22z" fill="#76787a"/><path d="M-5-37v-5a5 5 0 0 1 10 0v5" fill="none" stroke="#76787a" stroke-width="2.200"/><path d="M-5-33a5 5 0 0 0 10 0" fill="none" stroke="#2c3b59" stroke-width="2"/>';
const cross = '<path d="M0-50v28M-8-40H8" stroke="#76787a" stroke-width="3.200"/>';
const cart = '<path d="M-13-45h5l2 3H11l-4 10H-4l-5-11h-4z" fill="#76787a"/><path d="M-5-29H9" stroke="#76787a" stroke-width="2"/><circle cx="-4" cy="-25" r="2.200" fill="#76787a"/><circle cx="7" cy="-25" r="2.200" fill="#76787a"/>';
const mortar = '<path d="M-12-43H12l-2 8 2 10H-12l2-10zM2-43l3-7 3 1-2 6z" fill="#80797a"/>';
const tower = '<path d="M-10-44h9v-7l6 2-4 3v2h9v5h-2v9h4v3h-24v-3h4v-9h-2z" fill="#7d8282"/><circle cy="-31" r="2.800" fill="#23383c"/>';
const pin = (x, y, fill, glyph) => `<g transform="translate(${x} ${y})"><path d="M0 0C-4-16-20-22-20-37A20 20 0 0 1 20-37C20-22 4-16 0 0Z" fill="${fill}" stroke="#55585b" stroke-width="1"/>${glyph}</g>`;
out += pin(371,843,'#33373a',dot) + pin(439,826,'#33373a',dot) + pin(531,962,'#33373a',dot) + pin(539,1056,'#2c3b59',bag) + pin(1444,1027,'#33373a',cross)
 + pin(1594,1156,'#2c3b59',cart) + pin(1680,1284,'#2c3b59',bag) + pin(1837,769,'#33373a',dot) + pin(1971,826,'#59302c',mortar) + pin(1962,931,'#33373a',dot)
 + pin(2062,1205,'#33373a',dot) + pin(2337,1057,'#2c3b59',bag) + pin(2734,904,'#353b3a',dot) + pin(2897,1153,'#23383c',tower) + pin(69,686,'#552a3b','') + pin(2383,667,'#33373a','');
out += `<g transform="translate(554 867)"><rect width="30" height="30" rx="5" fill="#28364e"/><rect x="6" y="4.500" width="18" height="18" rx="4" fill="#76787a"/><path d="M9 9h5v5H9zM16 9h5v5h-5z" fill="#28364e"/><circle cx="10.500" cy="18.500" r="1.500" fill="#28364e"/><circle cx="19.500" cy="18.500" r="1.500" fill="#28364e"/><path d="M9 26l3-3h6l3 3" fill="none" stroke="#76787a" stroke-width="2"/></g>`;

for (let i = 0; i < 7; i++) out += `<text x="${-7 + 512 * i}" y="1069.500" font-family="Liberation Sans" font-size="30" textLength="421" lengthAdjust="spacingAndGlyphs" fill="#abadaf">For development purposes only</text>`;
out += `<g transform="translate(1680 957)"><path d="M0 0C-3-22-25-30-25-48A25 25 0 0 1 25-48C25-30 3-22 0 0Z" fill="#dd5140" stroke="#b1372c" stroke-width="1.500"/><circle cy="-48" r="10" fill="#a5281e"/></g>`;
out += `<text x="20" y="1243" font-family="Lato" font-weight="400" font-size="38" textLength="111" lengthAdjust="spacingAndGlyphs" fill="none" stroke="#45484b" stroke-width="6">Google</text><text x="20" y="1243" font-family="Lato" font-weight="400" font-size="38" textLength="111" lengthAdjust="spacingAndGlyphs" fill="#fff" stroke="#fff" stroke-width=".8">Google</text>`;
document.getElementById('map').innerHTML = out;
</script>
</body>
</html>
